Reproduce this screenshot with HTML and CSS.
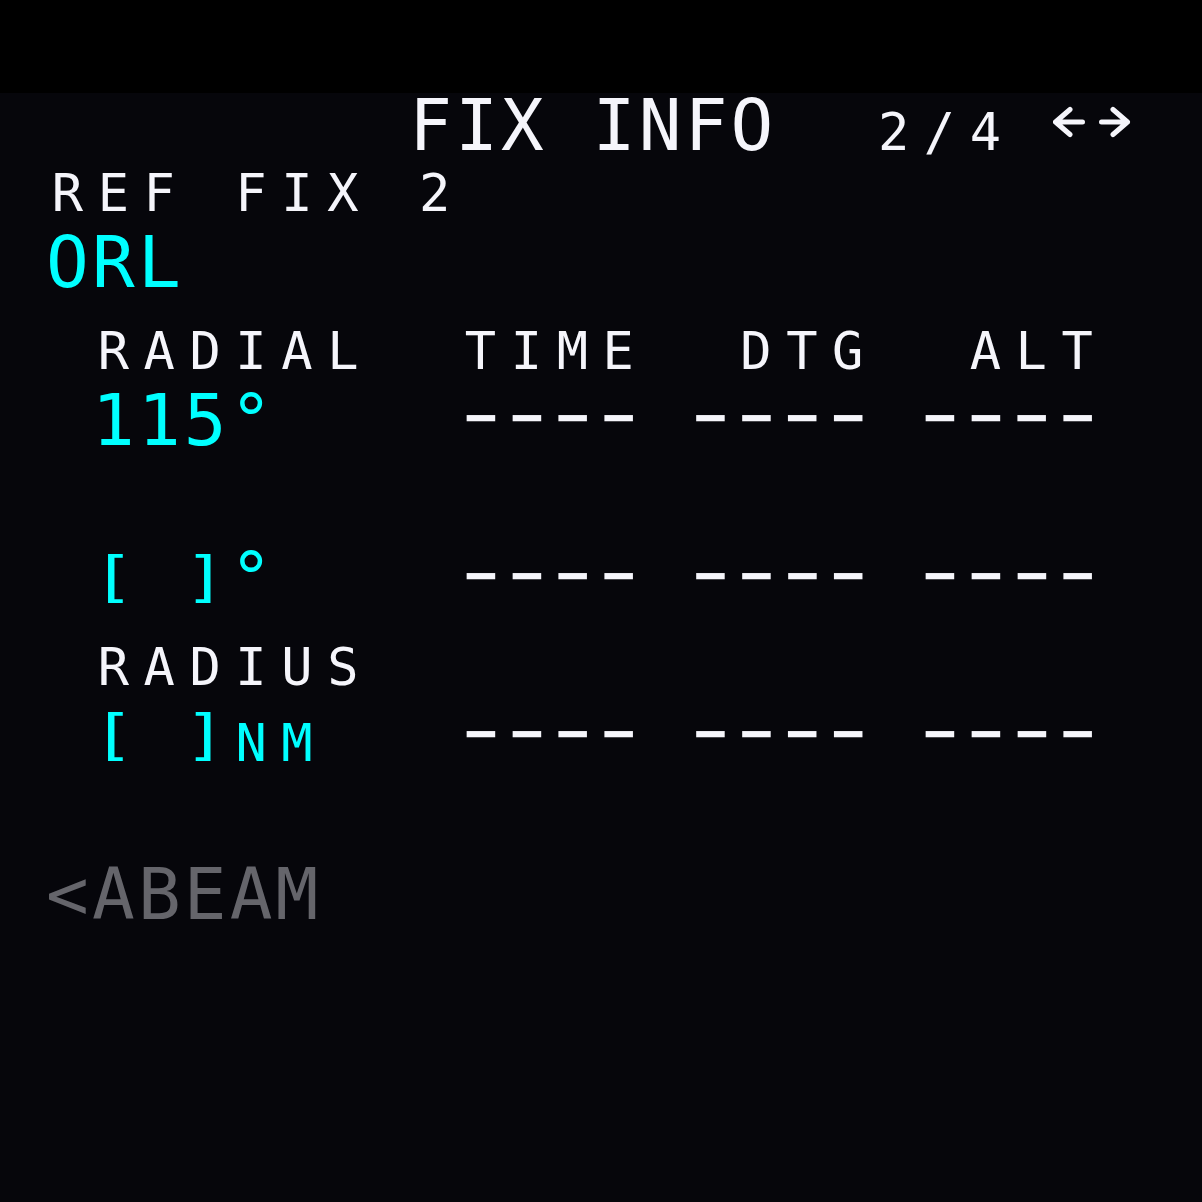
FILE: index.html
```html
<!DOCTYPE html>
<html lang="en">
<head>
<meta charset="utf-8">
<title>MCDU - FIX INFO</title>
<link rel="stylesheet" href="styles.css">
</head>
<body>
<div class="screen">
  <div class="row row-title"><span class="txt">        <span class="title">FIX INFO</span>  <span class="sm">2/4</span> <svg class="arrows" viewBox="0 0 80 32" aria-label="previous / next page"><path d="M2.5 16H29.5M17 3.5L2.5 16L17 28.5M48.5 16H74.5M60 3.5L74.5 16L60 28.5"/></svg></span></div>
  <div class="row row-first"><span class="txt lbl">REF FIX 2</span></div>
  <div class="row"><span class="txt cyan">ORL</span></div>
  <div class="row"><span class="txt lbl"> RADIAL  TIME  DTG  ALT</span></div>
  <div class="row"><span class="txt"> <span class="cyan">115°</span>    <span class="dashes">−−−−</span> <span class="dashes">−−−−</span> <span class="dashes">−−−−</span></span></div>
  <div class="row"><span class="txt lbl"></span></div>
  <div class="row"><span class="txt"> <span class="cyan"><span class="br">[</span> <span class="br">]</span>°</span>    <span class="dashes">−−−−</span> <span class="dashes">−−−−</span> <span class="dashes">−−−−</span></span></div>
  <div class="row"><span class="txt lbl"> RADIUS</span></div>
  <div class="row"><span class="txt"> <span class="cyan"><span class="br">[</span> <span class="br">]</span><span class="sm">NM</span></span>   <span class="dashes">−−−−</span> <span class="dashes">−−−−</span> <span class="dashes">−−−−</span></span></div>
  <div class="row"><span class="txt lbl"></span></div>
  <div class="row"><span class="txt gray">&lt;ABEAM</span></div>
</div>
</body>
</html>
```
FILE: styles.css
```css
html, body {
  margin: 0;
  padding: 0;
  background: #000;
}

body {
  width: 1202px;
  height: 1202px;
  overflow: hidden;
}

.screen {
  margin-top: 93px;
  height: 1109px;
  box-sizing: border-box;
  background: #06060b;
  padding-left: 46.1px;
  font-family: "DejaVu Sans Mono", monospace;
  color: #f5f5fb;
}

.row {
  height: 79px;
  display: flex;
  align-items: flex-end;
}

.row-title {
  height: 68px;
}

.row-first {
  height: 58px;
}

.txt {
  white-space: pre;
  font-size: 71px;
  line-height: 71px;
  letter-spacing: 3.15px;
}

.lbl {
  font-size: 52px;
  line-height: 52px;
  letter-spacing: 14.59px;
  padding-left: 5.7px;
}

.sm {
  font-size: 52px;
  line-height: 52px;
  letter-spacing: 14.59px;
  margin-left: 5.7px;
  margin-right: -5.7px;
}

.title {
  margin-left: -4px;
  margin-right: 4px;
}

.dashes {
  font-size: 53px;
  line-height: 53px;
  font-weight: bold;
  letter-spacing: 13.99px;
  vertical-align: 10px;
  margin-left: 5.85px;
  margin-right: -5.85px;
}

.br {
  display: inline-block;
  transform-origin: 21px 28px;
  transform: scaleY(0.78);
}

.cyan {
  color: #00ffff;
}

.gray {
  color: #65656b;
}

.arrows {
  width: 80px;
  height: 32px;
  vertical-align: 12px;
  margin-left: -3px;
  fill: none;
  stroke: #f5f5fb;
  stroke-width: 5;
  stroke-linecap: round;
  stroke-linejoin: round;
}
```
